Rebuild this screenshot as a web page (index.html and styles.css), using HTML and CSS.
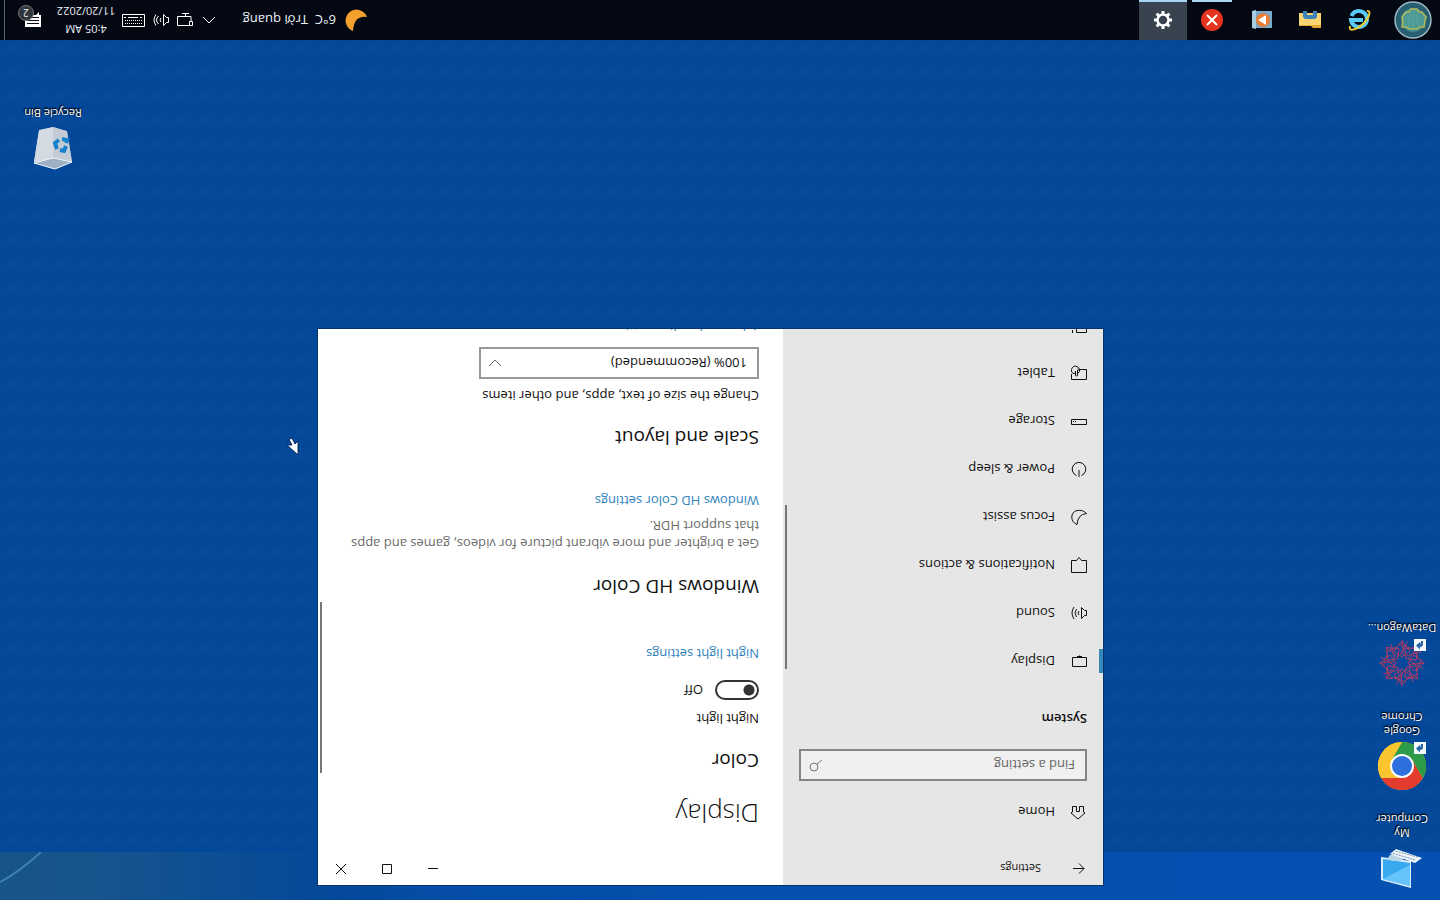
FILE: index.html
```html
<!DOCTYPE html>
<html lang="en">
<head>
<meta charset="utf-8">
<title>Settings</title>
<link rel="stylesheet" href="styles.css">
</head>
<body>
<div class="screen">
  <main class="desktop">
    <svg class="wallpaper-streak" viewBox="0 0 340 48" preserveAspectRatio="none" aria-hidden="true"><path d="M299 48 Q322 27 340 18" fill="none" stroke="#4b8fc0" stroke-width="2" opacity=".75"/></svg>

    <a class="shortcut computer" href="#">
      <svg class="shortcut-icon" viewBox="0 0 48 48" aria-hidden="true">
        <path d="M15 4 L45 12 V35 L15 31Z" fill="#dbefff"/><path d="M16 6 L43 13 V33 L16 29Z" fill="#38a8ef"/><path d="M16 6 L43 13 L16 27Z" fill="#65c4fa"/>
        <path d="M22 33 Q29 29 39 33 L36 37 L25 37Z" fill="#b9d3e3"/>
        <path d="M4 34 L11 29 L36 38 L30 43Z" fill="#eef6fc"/><path d="M8 35 L31 41 M11 32 L34 39" stroke="#7892ab" stroke-width="1" stroke-dasharray="2 1"/>
      </svg>
      <span>My<br>Computer</span>
    </a>
    <a class="shortcut chrome" href="#">
      <svg class="shortcut-icon" viewBox="0 0 48 48" aria-hidden="true">
        <circle cx="24" cy="24" r="24" fill="#fbc52f"/>
        <path d="M24 12 H44.800 A24 24 0 0 0 3.200 12 L13.600 30Z" fill="#e33b2e"/>
        <path d="M3.200 12 L13.600 30 L24 36 L34.400 30 L24 48 A24 24 0 0 1 3.200 12Z" fill="#2c9c49"/>
        <path d="M24 12 H44.800 A24 24 0 0 1 24 48 L34.400 30Z" fill="#fbc52f"/>
        <circle cx="24" cy="24" r="12" fill="#fff"/><circle cx="24" cy="24" r="10" fill="#2d70de"/>
        <path d="M0 36h12v12H0z" fill="#f4f9ff"/><path d="M3 46 V43 Q3 40 6 40 V37.500 L10 41.500 L6 45 V43 Q5 43 5 46Z" fill="#2666a8"/>
      </svg>
      <span>Google<br>Chrome</span>
    </a>
    <a class="shortcut wagon" href="#">
      <svg class="shortcut-icon" viewBox="0 0 48 48" aria-hidden="true">
        <g fill="none" stroke="#b83a60" stroke-width=".9">
          <path id="ray" d="M24 18 L16 12 L24 2 M24 18 L32 12 L24 2 M20 5 L32 9 M17 20 L13 5 M30 20 L40 8"/>
          <use href="#ray" transform="rotate(45 24 24)"/><use href="#ray" transform="rotate(90 24 24)"/><use href="#ray" transform="rotate(135 24 24)"/><use href="#ray" transform="rotate(180 24 24)"/><use href="#ray" transform="rotate(225 24 24)"/><use href="#ray" transform="rotate(270 24 24)"/><use href="#ray" transform="rotate(315 24 24)"/>
        </g>
        <path d="M0 36h12v12H0z" fill="#f4f9ff"/><path d="M3 46 V43 Q3 40 6 40 V37.500 L10 41.500 L6 45 V43 Q5 43 5 46Z" fill="#2666a8"/>
      </svg>
      <span>DataWagon...</span>
    </a>
    <a class="shortcut bin" href="#">
      <svg class="shortcut-icon" viewBox="0 0 48 48" aria-hidden="true">
        <path d="M5 10 L24 3 L43 10 L38 41 L24 45 L10 40Z" fill="#b9c6d4"/><path d="M5 10 L24 14 L24 45 L10 41Z" fill="#c3ccd6"/><path d="M24 14 L43 10 L38 42 L24 45Z" fill="#d3dae2"/>
        <path d="M5 10 L22 3 L43 9 L24 14Z" fill="#9dafc1" stroke="#edf5fb"/>
        <g fill="none" stroke="#1681cc" stroke-width="4"><path d="M11 26 L13 21 L17 22"/><path d="M20 23 L22 29 L18 32"/><path d="M15 33 L10 32 L11 29"/></g>
      </svg>
      <span>Recycle Bin</span>
    </a>

    <section class="window" aria-label="Settings">
      <aside class="sidebar">
        <header class="sidebar-title">
          <button class="back" aria-label="Back"><svg width="16" height="16" viewBox="0 0 16 16"><path d="M14 7.500H3M8 2.500l-5 5 5 5"/></svg></button>
          <span>Settings</span>
        </header>
        <a class="nav-item home" href="#"><svg width="16" height="16" viewBox="0 0 16 16"><path d="M2 7 L9 1 L16 7 L15 8 H14.500 V13.500 H10.500 V8.500 H7.500 V13.500 H3.500 V8 H3Z"/></svg>Home</a>
        <label class="search">
          <input type="text" placeholder="Find a setting" aria-label="Find a setting">
          <svg width="16" height="16" viewBox="0 0 16 16"><circle cx="11" cy="6" r="4"/><path d="M8 9L3 13"/></svg>
        </label>
        <h2 class="group">System</h2>
        <nav class="nav">
          <a class="nav-item current" href="#"><svg width="16" height="16" viewBox="0 0 16 16"><path d="M.5 2.500h14v9H.5zM7.500 11.500v2M5 12.500h5"/></svg>Display</a>
          <a class="nav-item" href="#"><svg width="16" height="16" viewBox="0 0 16 16"><path d="M.5 5.500h2l3-3v11l-3-3h-2zM8 6q2 2 0 4M10.500 4q3 4 0 8M13 2q4 6 0 12"/></svg>Sound</a>
          <a class="nav-item" href="#"><svg width="16" height="16" viewBox="0 0 16 16"><path d="M.5 .5h15v12h-5l-2.500 3-2.500-3h-5z"/></svg>Notifications &amp; actions</a>
          <a class="nav-item" href="#"><svg width="16" height="16" viewBox="0 0 16 16"><path d="M10 .5 C17 3 17 13 10 14.500 Q4 15.500 .5 11.500 Q9 11 10 .5Z"/></svg>Focus assist</a>
          <a class="nav-item" href="#"><svg width="16" height="16" viewBox="0 0 16 16"><path d="M5.500 1.500A6.800 6.800 0 1 0 10.500 1.500M8 0v7"/></svg>Power &amp; sleep</a>
          <a class="nav-item" href="#"><svg width="16" height="16" viewBox="0 0 16 16"><path d="M.5 4.500h15v5H.5zM11 7.500h1M13 7.500h1"/></svg>Storage</a>
          <a class="nav-item" href="#"><svg width="16" height="16" viewBox="0 0 16 16"><path d="M7 11.500H.5v-10h15V7M9.500 11V5.500Q10.500 4.500 11.500 5.500V10M9.500 12L7 10M9 8Q6.500 9 7.500 12Q9 15 12 15Q16 14 15.500 9.500Q15 7 11.500 7.500"/></svg>Tablet</a>
          <a class="nav-item" href="#" aria-label="Multitasking"><svg width="16" height="16" viewBox="0 0 16 16"><path d="M.5 15V.5h10V15M14.500 0v3"/></svg></a>
        </nav>
        <div class="thumb"></div>
      </aside>
      <div class="content">
        <header class="controls">
          <button aria-label="Minimize"><svg width="12" height="12" viewBox="0 0 12 12"><path d="M1 5.500h10"/></svg></button>
          <button aria-label="Maximize"><svg width="12" height="12" viewBox="0 0 12 12"><path d="M1.500 .5h9v9h-9z"/></svg></button>
          <button aria-label="Close"><svg width="12" height="12" viewBox="0 0 12 12"><path d="M1 0l10 10M11 0L1 10"/></svg></button>
        </header>
        <div class="page">
          <h1>Display</h1>
          <h2>Color</h2>
          <label class="caption" for="night">Night light</label>
          <div class="toggle"><input type="checkbox" id="night"><span>Off</span></div>
          <a class="link night-link" href="#">Night light settings</a>
          <h2>Windows HD Color</h2>
          <p class="note">Get a brighter and more vibrant picture for videos, games and apps that support HDR.</p>
          <a class="link hd-link" href="#">Windows HD Color settings</a>
          <h2>Scale and layout</h2>
          <label class="caption" for="scale">Change the size of text, apps, and other items</label>
          <div class="select-box">
            <select id="scale"><option>100% (Recommended)</option></select>
            <svg width="14" height="14" viewBox="0 0 14 14"><path d="M1 4l6 6 6-6"/></svg>
          </div>
          <a class="link" href="#">Advanced scaling settings</a>
        </div>
        <div class="thumb"></div>
      </div>
    </section>

    <svg class="cursor" viewBox="0 0 13 20" aria-hidden="true"><path d="M1 1V15L4 12L7 18L10 16.500L7 11H12Z" fill="#fff" stroke="#06285c"/></svg>
  </main>

  <footer class="taskbar">
    <div class="apps">
      <button class="start" aria-label="Start"><svg width="38" height="38" viewBox="0 0 38 38"><circle cx="19" cy="19" r="18" fill="#285f70" stroke="#9ab7c2" stroke-width="1.500"/><circle cx="19" cy="19" r="12" fill="#3f8790"/><path d="M8 12h4l3-2h8l3 2h4l-1 6 1 4-4 5h-3l-2 3h-6l-2-3h-3l-4-5 1-4z" fill="#4d9a95" stroke="#b5b957" stroke-width="1.500"/><path d="M19 12v14M14 13l2 12M24 13l-2 12" stroke="#5ea7a4"/></svg></button>
      <button aria-label="Internet Explorer"><svg width="24" height="24" viewBox="0 0 24 24"><path d="M19.500 16 A8 8 0 1 1 20 12 H8" fill="none" stroke="#5bcaf4" stroke-width="4"/><path d="M4 21 C-1 22 2 13 9 7 C15 2 23 0 21 6" fill="none" stroke="#e8cc39" stroke-width="2"/></svg></button>
      <button aria-label="File Explorer"><svg width="24" height="24" viewBox="0 0 24 24"><path d="M1 4h8l2 2h12v12H1z" fill="#e7a936"/><path d="M1 7h22v12H1z" fill="#f8d472"/><path d="M5 21v-6l2-2h10l2 2v6h-4v-4H9v4z" fill="#3c82bb"/></svg></button>
      <button aria-label="Media player"><svg width="24" height="24" viewBox="0 0 24 24"><path d="M1 4h18v17H1z" fill="#79a9cb"/><path d="M17 3l4 1v17l-4 1z" fill="#a8cee4"/><circle cx="10" cy="12" r="7" fill="#e97c32"/><path d="M7 7l8 5-8 5z" fill="#fff"/></svg></button>
      <button class="open" aria-label="Error"><svg width="24" height="24" viewBox="0 0 24 24"><circle cx="12" cy="12" r="11" fill="#e63420"/><path d="M7 7l10 10M17 7L7 17" stroke="#fff" stroke-width="2"/></svg></button>
      <button class="open active" aria-label="Settings"><svg width="24" height="24" viewBox="0 0 24 24"><circle cx="12" cy="12" r="5.500" fill="none" stroke="#fff" stroke-width="2.500"/><path d="M10.500 3h3v4h-3zM10.500 17h3v4h-3zM3 10.500h4v3H3zM17 10.500h4v3h-4z" fill="#fff"/><path d="M10.500 3h3v4h-3zM10.500 17h3v4h-3zM3 10.500h4v3H3zM17 10.500h4v3h-4z" fill="#fff" transform="rotate(45 12 12)"/></svg></button>
    </div>
    <div class="tray">
      <button class="weather"><svg width="24" height="24" viewBox="0 0 24 24"><path d="M15 1 A11 11 0 1 1 1 15 Q14 17 15 1Z" fill="#f3a12c"/></svg><span>6°C&nbsp; Trời quang</span></button>
      <button class="glyph" aria-label="Show hidden icons"><svg width="16" height="16" viewBox="0 0 16 16"><path d="M2 11l6-6 6 6"/></svg></button>
      <button class="glyph" aria-label="Network"><svg width="18" height="16" viewBox="0 0 18 16"><path d="M4 2.500h12.500v9H4M8.500 11.500v3M5 14.500h7M1.500 2.500h3v4h-3zM3 6.500v5h3"/></svg></button>
      <button class="glyph" aria-label="Volume"><svg width="16" height="16" viewBox="0 0 16 16"><path d="M.5 5.500h2l3-3v11l-3-3h-2zM8 6q2 2 0 4M10.500 4q4 4 0 8M13 2.500q4 5.500 0 11"/></svg></button>
      <button class="glyph keyboard" aria-label="Touch keyboard"><svg width="24" height="14" viewBox="0 0 24 14"><path d="M.5 .5h22v12H.5z"/><path d="M3 3.500h18M3 6.500h18" stroke-dasharray="1 1"/><path d="M3 9.500h2M7 9.500h10M19 9.500h2"/></svg></button>
      <button class="clock">4:05 AM<br>11/20/2022</button>
      <button class="action" aria-label="Notifications, 2 new"><svg width="18" height="18" viewBox="0 0 18 18"><path d="M1 2h16v12H6l-3 3v-3H1z" fill="#fff"/><path d="M3 5.500h12M3 8.500h12M3 11.500h9" stroke="#080d14"/></svg><span class="count">2</span></button>
      <button class="peek" aria-label="Show desktop"></button>
    </div>
  </footer>
</div>
</body>
</html>
```
FILE: styles.css
```css
* { box-sizing: border-box; }
body { margin: 0; font: 13px/18px "Open Sans", "Noto Sans", sans-serif; color: #111; }
button, input, select { font: inherit; color: inherit; margin: 0; padding: 0; border: 0; background: none; }
a { color: inherit; text-decoration: none; }
h1, h2, p { margin: 0; }
svg { flex: none; }

/* The display runs in landscape (flipped) orientation. */
.screen { display: flex; flex-direction: column; height: 100vh; overflow: hidden; transform: rotate(180deg); }

.desktop {
  position: relative; flex: 1; min-height: 0; overflow: hidden;
  background:
    linear-gradient(to left, #175488 0, #14538e 120px, #03489a 340px, transparent 420px) 0 0 / 100% 48px no-repeat,
    linear-gradient(to right, #0650b2 0, #0550ad 50%, #04489a 100%) 0 0 / 100% 48px no-repeat,
    radial-gradient(circle at 12px 12px, #15519c66 0, #15519c33 3px, transparent 5px) 0 0 / 24px 24px,
    #04489a;
}
.wallpaper-streak { position: absolute; top: 0; right: 0; width: 340px; height: 48px; }

.shortcut {
  position: absolute; display: flex; flex-direction: column; align-items: center; gap: 4px; width: 76px;
  color: #fff; font-size: 11px; line-height: 14px; text-align: center; text-shadow: 0 1px 2px #000, 1px 1px 1px #000;
}
.shortcut-icon { width: 48px; height: 48px; }
.computer { left: 0; top: 8px; }
.chrome { left: 0; top: 110px; }
.wagon { left: 0; top: 213px; }
.bin { right: 15px; top: 728px; }
.cursor { position: absolute; left: 1141px; top: 444px; width: 13px; height: 20px; }

.window {
  position: absolute; left: 337px; right: 318px; top: 15px; bottom: 289px;
  display: grid; grid-template-columns: 320px 1fr; overflow: hidden; background: #fff;
  box-shadow: 0 0 0 1px #07346a;
}
.window svg { fill: none; stroke: #111; stroke-width: 1; }
.sidebar, .content { position: relative; min-width: 0; min-height: 0; overflow: hidden; }
.sidebar { background: #e6e6e6; }
.sidebar-title { display: flex; align-items: center; gap: 14px; height: 34px; font-size: 11px; }
.back { display: grid; place-items: center; width: 48px; height: 34px; }
.nav-item { display: flex; align-items: center; gap: 16px; height: 48px; padding: 0 16px; }
.home { margin-top: 15px; }
.search { display: flex; align-items: center; height: 32px; margin: 7px 16px 0; padding: 0 8px 0 10px; border: 2px solid #858585; background: #f0f0f0; }
.search input { flex: 1; min-width: 0; outline: 0; }
.search input::placeholder { color: #666; opacity: 1; }
.search svg { stroke: #777; }
.group { margin: 21px 16px 26px; font-size: 13px; line-height: 18px; font-weight: 600; }
.nav { margin-top: -1px; }
.current { background: linear-gradient(#3488bb, #3488bb) 0 center / 4px 24px no-repeat; }
.thumb { position: absolute; right: 2px; width: 2px; background: #777; }
.sidebar .thumb { top: 216px; height: 164px; }
.content .thumb { top: 112px; height: 171px; }

.controls { display: flex; justify-content: flex-end; height: 34px; }
.controls button { display: grid; place-items: center; width: 46px; }
.page { display: flex; flex-direction: column; align-items: flex-start; padding: 19px 24px 0; }
.page h1 { font-size: 26px; line-height: 36px; font-weight: 300; }
.page h2 { font-size: 19px; line-height: 24px; font-weight: 400; margin: 46px 0 22px; }
.page h1 + h2 { margin: 23px 0 21px; }
.toggle { display: flex; align-items: center; gap: 12px; height: 20px; margin-top: 10px; }
.toggle input { appearance: none; width: 44px; height: 20px; border: 2px solid #333; border-radius: 10px; background: radial-gradient(circle at 8px 8px, #333 5px, transparent 6px); }
.link { color: #2f83bb; }
.night-link { margin-top: 17px; }
.note { color: #6b6b6b; }
.hd-link { margin-top: 7px; }
.page .hd-link + h2 { margin: 42px 0 21px; }
.select-box { position: relative; width: 280px; height: 32px; margin: 8px 0 12px; }
.select-box select { appearance: none; width: 100%; height: 32px; padding: 0 32px 0 10px; border: 2px solid #999; background: #fff; }
.select-box svg { position: absolute; right: 9px; top: 9px; stroke: #666; pointer-events: none; }

.taskbar { display: flex; justify-content: space-between; height: 40px; background: #030812; color: #eef3f8; }
.apps { display: flex; gap: 1px; }
.apps button { display: grid; place-items: center; width: 48px; height: 40px; }
.apps .start { width: 56px; padding-right: 2px; }
.apps .open { background: linear-gradient(#a9d5f5, #a9d5f5) center bottom / 40px 2px no-repeat; }
.apps .active { background: linear-gradient(#a9d5f5, #a9d5f5) center bottom / 48px 2px no-repeat, #39424f; }
.tray { display: flex; font-size: 13px; }
.weather { display: flex; align-items: center; gap: 8px; width: 147px; white-space: nowrap; }
.glyph { display: grid; place-items: center; width: 24px; }
.glyph svg { fill: none; stroke: #fff; stroke-width: 1; }
.keyboard { width: 32px; }
.clock { width: 62px; font-size: 11px; line-height: 18px; text-align: center; white-space: nowrap; }
.action { position: relative; display: grid; place-items: center; width: 50px; padding-right: 6px; }
.count { position: absolute; left: 21px; top: 19px; width: 16px; height: 16px; border: 1px solid #777; border-radius: 8px; background: #30353b; font-size: 10px; line-height: 14px; }
.peek { width: 5px; border-left: 1px solid #59616c; }
```
